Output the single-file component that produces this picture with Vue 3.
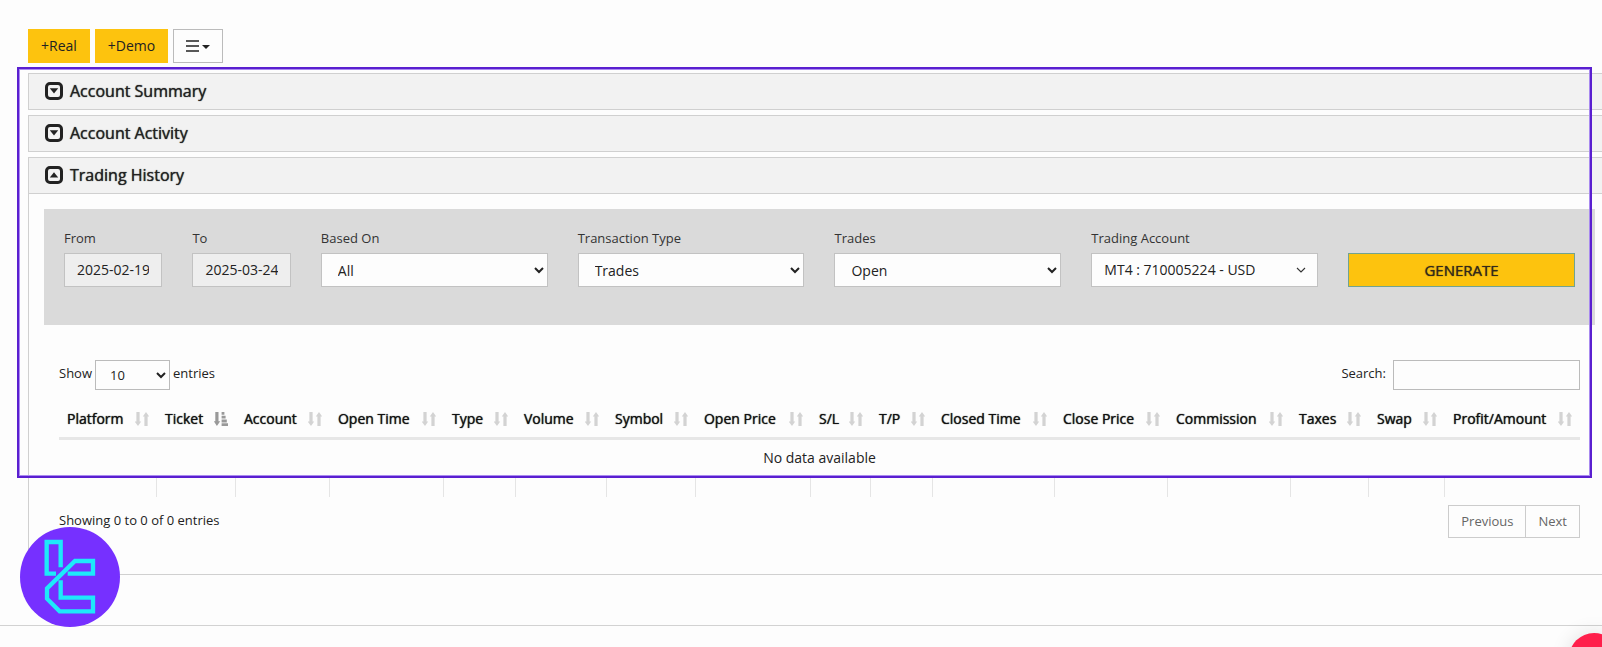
<script setup>
import { ref } from 'vue';

const panels = ['Account Summary', 'Account Activity'];

const from = ref('2025-02-19');
const to = ref('2025-03-24');
const search = ref('');

const filters = [
  { id: 'based-on', label: 'Based On', value: 'All' },
  { id: 'transaction-type', label: 'Transaction Type', value: 'Trades' },
  { id: 'trades', label: 'Trades', value: 'Open' }
];

// relative column weights
const columns = [
  { name: 'Platform', w: 98 },
  { name: 'Ticket', w: 79, sorted: true },
  { name: 'Account', w: 94 },
  { name: 'Open Time', w: 114 },
  { name: 'Type', w: 72 },
  { name: 'Volume', w: 91 },
  { name: 'Symbol', w: 89 },
  { name: 'Open Price', w: 115 },
  { name: 'S/L', w: 60 },
  { name: 'T/P', w: 62 },
  { name: 'Closed Time', w: 122 },
  { name: 'Close Price', w: 113 },
  { name: 'Commission', w: 123 },
  { name: 'Taxes', w: 78 },
  { name: 'Swap', w: 76 },
  { name: 'Profit/Amount', w: 135 }
];
const total = columns.reduce((sum, c) => sum + c.w, 0);
</script>

<template>
  <div class="page">
    <main class="content">
      <div class="toolbar">
        <button type="button" class="btn btn-yellow">+Real</button>
        <button type="button" class="btn btn-yellow">+Demo</button>
        <button type="button" class="btn btn-menu" aria-label="Menu">
          <svg width="24" height="12" viewBox="0 0 24 12">
            <path d="M0 1h13M0 6h13M0 11h13" stroke="#222" stroke-width="1.4" />
            <path d="M16 5h8l-4 4z" fill="#222" />
          </svg>
        </button>
      </div>

      <section v-for="title in panels" :key="title" class="panel">
        <h2 class="panel-head">
          <svg class="caret" viewBox="0 0 18 18">
            <rect x="1.5" y="1.5" width="15" height="15" rx="3.5" />
            <path d="M4.8 6.2h8.4L9 11.6z" />
          </svg>
          {{ title }}
        </h2>
      </section>

      <section class="panel">
        <h2 class="panel-head">
          <svg class="caret" viewBox="0 0 18 18">
            <rect x="1.5" y="1.5" width="15" height="15" rx="3.5" />
            <path d="M4.8 11.5h8.4L9 6.2z" />
          </svg>
          Trading History
        </h2>

        <div class="panel-body">
          <form class="filters" @submit.prevent>
            <div class="field">
              <label for="from">From</label>
              <input id="from" v-model="from" class="control date" type="text" readonly>
            </div>
            <div class="field">
              <label for="to">To</label>
              <input id="to" v-model="to" class="control date" type="text" readonly>
            </div>
            <div v-for="f in filters" :key="f.id" class="field wide">
              <label :for="f.id">{{ f.label }}</label>
              <select :id="f.id" class="control">
                <option>{{ f.value }}</option>
              </select>
            </div>
            <div class="field wide">
              <label for="account">Trading Account</label>
              <select id="account" class="control plain">
                <option>MT4 : 710005224 - USD</option>
              </select>
              <svg class="chevron" width="10" height="6" viewBox="0 0 10 6">
                <path d="M1 1l4 4 4-4" fill="none" stroke="#333" stroke-width="1.1" />
              </svg>
            </div>
            <button type="submit" class="generate wide">GENERATE</button>
          </form>

          <div class="grid-area">
            <div class="grid-tools">
              <label class="length">
                Show
                <select class="length-select">
                  <option>10</option>
                </select>
                entries
              </label>
              <label class="search">
                Search:
                <input v-model="search" type="search">
              </label>
            </div>

            <table>
              <colgroup>
                <col v-for="c in columns" :key="c.name" :style="{ width: (c.w / total) * 100 + '%' }">
              </colgroup>
              <thead>
                <tr>
                  <th v-for="c in columns" :key="c.name" scope="col">
                    <div class="th-inner">
                      {{ c.name }}
                      <svg v-if="c.sorted" class="sort active" viewBox="0 0 14 14">
                        <path d="M1.3 0h3.2v9.3h1.7L2.9 14-.2 9.3h1.5z" />
                        <path d="M7.6 0h2.8v2.8H7.6zM7.6 3.8h4V6.6h-4zM7.6 7.6h5.2v2.8H7.6zM7.6 11.3H14V14H7.6z" />
                      </svg>
                      <svg v-else class="sort" viewBox="0 0 14 14">
                        <path d="M1.4 0h3.2v9.6h1.6L3 14-.2 9.6h1.6z" />
                        <path d="M9.4 14h3.2V4.4h1.6L11 0 7.8 4.4h1.6z" />
                      </svg>
                    </div>
                  </th>
                </tr>
              </thead>
              <tbody>
                <tr>
                  <td :colspan="columns.length" class="empty">No data available</td>
                </tr>
              </tbody>
              <tfoot>
                <tr>
                  <td v-for="c in columns" :key="c.name"></td>
                </tr>
              </tfoot>
            </table>

            <div class="grid-footer">
              <span>Showing 0 to 0 of 0 entries</span>
              <nav class="pager">
                <a href="#">Previous</a>
                <a href="#">Next</a>
              </nav>
            </div>
          </div>
        </div>
      </section>
    </main>

    <div class="highlight"></div>

    <svg class="brand" viewBox="0 0 300 300">
      <circle cx="150" cy="150" r="150" fill="#7630ff" />
      <g fill="none" stroke="#1de9fa" stroke-width="13">
        <path d="M108 140H80V45h42v76" />
        <path d="M122 160v52h97v41H119l-38-38v-31l84-82h54v38h-76" />
      </g>
    </svg>

    <div class="chat-bubble"></div>
  </div>
</template>

<style>
html,
body {
  margin: 0;
  background: #fdfdfd;
  overflow: hidden;
}
</style>

<style scoped>
.page {
  position: relative;
  overflow: hidden;
  height: 100vh;
  font: 14px/20px 'Open Sans', 'Noto Sans', sans-serif;
  color: #222;
}

.page *,
.page {
  box-sizing: border-box;
}

/* the panels run past the right edge of the window */
.content {
  padding: 29px 0 50px 28px;
  margin-right: -9px;
  border-bottom: 1px solid #d2d2d2;
}

button,
input,
select {
  font: inherit;
  color: inherit;
  border-radius: 0;
}

.toolbar {
  display: flex;
  gap: 5px;
  margin-bottom: 10px;
}

.btn {
  height: 34px;
  padding: 0 13px;
  border: 0;
}

.btn-yellow {
  background: #fdc30e;
}

.btn-menu {
  display: flex;
  align-items: center;
  padding: 0 12px;
  background: #fdfdfd;
  border: 1px solid #bbb;
}

.panel {
  margin-bottom: 5px;
  border: 1px solid #d0d0d0;
}

.panel:last-child {
  margin-bottom: 0;
}

.panel-head {
  display: flex;
  align-items: center;
  gap: 7px;
  height: 35px;
  margin: 0;
  padding: 0 0 1px 16px;
  background: #f2f2f2;
  font-size: 16px;
  font-weight: 400;
}

/* a touch heavier than regular without widening the letters */
.panel-head,
.generate,
th {
  text-shadow: 0 0 1px currentColor;
}

.caret {
  width: 18px;
  height: 18px;
}

.caret rect {
  fill: none;
  stroke: #222;
  stroke-width: 3;
}

.caret path {
  fill: #222;
}

.panel-body {
  padding: 15px 15px 36px;
  border-top: 1px solid #d0d0d0;
}

.filters {
  display: grid;
  grid-template-columns: repeat(12, 1fr);
  column-gap: 30px;
  align-items: end;
  padding: 19px 20px 38px;
  background: #dadada;
}

.field {
  position: relative;
  min-width: 0;
}

.wide {
  grid-column: span 2;
}

.field label {
  display: block;
  margin-bottom: 5px;
  font-size: 13px;
  color: #333;
}

.control {
  display: block;
  width: 100%;
  height: 34px;
  padding: 0 12px;
  border: 1px solid #c2c2c2;
  background: #fdfdfd;
}

.date {
  padding-bottom: 2px;
  background: #eee;
}

.plain {
  appearance: none;
}

.chevron {
  position: absolute;
  right: 12px;
  bottom: 14px;
}

.generate {
  height: 34px;
  border: 1px solid #72a390;
  background: #fdc30e;
  font-size: 15px;
  color: #33291a;
}

.grid-area {
  padding: 35px 15px 0;
  font-size: 13px;
}

.grid-tools,
.grid-footer {
  display: flex;
  justify-content: space-between;
}

.length,
.search {
  display: flex;
  gap: 3px;
  line-height: 26px;
}

.search {
  gap: 7px;
}

.length-select {
  width: 75px;
  height: 30px;
  padding: 0 10px;
  border: 1px solid #bbb;
  background: #fdfdfd;
}

.search input {
  width: 187px;
  height: 30px;
  padding: 0 8px;
  border: 1px solid #bbb;
  background: #fdfdfd;
}

table {
  width: 100%;
  margin-top: 10px;
  table-layout: fixed;
  border-collapse: separate;
  border-spacing: 0;
  font-size: 14px;
}

th {
  height: 40px;
  padding: 0 8px;
  border-bottom: 3px solid #e7e7e7;
  font-weight: 400;
  color: #111;
  white-space: nowrap;
}

.th-inner {
  display: flex;
  align-items: center;
  justify-content: space-between;
}

.sort {
  flex: none;
  width: 14px;
  height: 14px;
  fill: #d3d3d3;
}

.sort.active {
  fill: #999;
}

td {
  padding: 0;
}

.empty {
  height: 37px;
  padding-bottom: 2px;
  text-align: center;
}

tfoot td {
  height: 20px;
  border-right: 1px solid #e5e5e5;
}

tfoot td:last-child {
  border-right: 0;
}

.grid-footer {
  padding-top: 8px;
  line-height: 31px;
}

.pager {
  display: flex;
  border: 1px solid #ccc;
}

.pager a {
  padding: 0 12px;
  color: #666;
  text-decoration: none;
}

.pager a + a {
  border-left: 1px solid #ccc;
}

/* overlays */
.highlight {
  position: absolute;
  top: 67px;
  right: 10px;
  left: 17px;
  height: 411px;
  border: 2px solid #5a1fd0;
  box-shadow: inset 0 0 0 1px #a98af0;
  pointer-events: none;
}

.brand {
  position: absolute;
  bottom: 20px;
  left: 20px;
  width: 100px;
  height: 100px;
}

.chat-bubble {
  position: absolute;
  right: -17px;
  bottom: -36px;
  width: 50px;
  height: 50px;
  border-radius: 50%;
  background: #ff1f4b;
  box-shadow: 0 0 20px rgba(0, 0, 0, 0.12);
}
</style>
